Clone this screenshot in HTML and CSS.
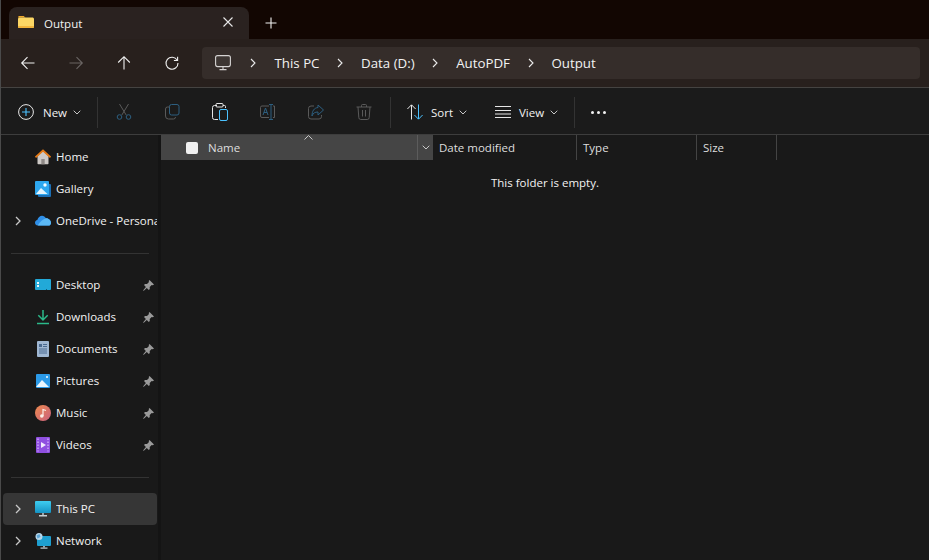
FILE: index.html
```html
<!DOCTYPE html>
<html lang="en">
<head>
    <meta charset="UTF-8">
    <meta name="viewport" content="width=device-width, initial-scale=1.0">
    <title>Output - File Explorer</title>
    <link rel="stylesheet" href="styles.css">
</head>
<body>
    <div class="titlebar">
        <div class="tab">
            <svg class="tab-icon" width="16" height="16" viewBox="0 0 16 16"><path d="M0 3.500C0 2.700.6 2 1.400 2h3.800c.4 0 .7.1 1 .4L7.600 3.600H0z" fill="#f2a92c"/><path d="M0 5c0-.9.7-1.600 1.600-1.600h12.800c.9 0 1.600.7 1.600 1.600v7.400c0 .9-.7 1.600-1.600 1.600H1.600C.7 14 0 13.300 0 12.400z" fill="#fcd765"/><path d="M0 12h16v.4c0 .9-.7 1.600-1.600 1.600H1.600C.7 14 0 13.300 0 12.400z" fill="#f2b53c"/></svg>
            <span class="tab-title">Output</span>
            <svg class="tab-close" width="10" height="10" viewBox="0 0 10 10"><path d="M.5.500l9 9M9.500.500l-9 9" stroke="#e8e8e8" stroke-width="1.100" fill="none"/></svg>
        </div>
        <svg class="tab-new" width="12" height="12" viewBox="0 0 12 12"><path d="M6 .5v11M.5 6h11" stroke="#f2f2f2" stroke-width="1.100" fill="none"/></svg>
    </div>

    <div class="navbar">
        <div class="nav-btn"><svg width="16" height="16" viewBox="0 0 16 16"><path d="M14.500 8H2M7.500 2.200 1.700 8l5.800 5.800" stroke="#f0f0f0" stroke-width="1.100" fill="none"/></svg></div>
        <div class="nav-btn"><svg width="16" height="16" viewBox="0 0 16 16"><path d="M1.500 8H14M8.500 2.200 14.300 8l-5.800 5.800" stroke="#6a6563" stroke-width="1.100" fill="none"/></svg></div>
        <div class="nav-btn"><svg width="16" height="16" viewBox="0 0 16 16"><path d="M8 14.500V2M2.200 7.500 8 1.700l5.800 5.800" stroke="#f0f0f0" stroke-width="1.100" fill="none"/></svg></div>
        <div class="nav-btn"><svg width="16" height="16" viewBox="0 0 16 16"><path d="M13.200 5.200A6 6 0 1 0 14 8" stroke="#f0f0f0" stroke-width="1.100" fill="none"/><path d="M13.600 1.800v3.700H9.900" stroke="#f0f0f0" stroke-width="1.100" fill="none"/></svg></div>
        <div class="address">
            <svg class="pc-icon" width="16" height="16" viewBox="0 0 16 16"><rect x=".6" y=".6" width="14.800" height="11" rx="2" stroke="#d5d3d2" stroke-width="1.100" fill="#3d3633"/><path d="M8 11.600v3M4.500 14.600h7" stroke="#d5d3d2" stroke-width="1.100" fill="none"/></svg>
            <svg class="crumb-sep" width="6" height="10" viewBox="0 0 6 10"><path d="M1 1l4 4-4 4" stroke="#ebebeb" stroke-width="1.100" fill="none"/></svg>
            <span class="crumb">This PC</span>
            <svg class="crumb-sep" width="6" height="10" viewBox="0 0 6 10"><path d="M1 1l4 4-4 4" stroke="#ebebeb" stroke-width="1.100" fill="none"/></svg>
            <span class="crumb">Data (D:)</span>
            <svg class="crumb-sep" width="6" height="10" viewBox="0 0 6 10"><path d="M1 1l4 4-4 4" stroke="#ebebeb" stroke-width="1.100" fill="none"/></svg>
            <span class="crumb">AutoPDF</span>
            <svg class="crumb-sep" width="6" height="10" viewBox="0 0 6 10"><path d="M1 1l4 4-4 4" stroke="#ebebeb" stroke-width="1.100" fill="none"/></svg>
            <span class="crumb">Output</span>
        </div>
    </div>

    <div class="toolbar">
        <div class="tool tool-new">
            <svg width="16" height="16" viewBox="0 0 16 16"><circle cx="8" cy="8" r="7.400" stroke="#e8e8e8" stroke-width="1" fill="none"/><path d="M8 4v8M4 8h8" stroke="#4cc2ff" stroke-width="1.100" fill="none"/></svg>
            <span class="tool-label">New</span>
            <svg class="caret" width="8" height="5" viewBox="0 0 8 5"><path d="M.7.700 4 4l3.300-3.300" stroke="#c8c8c8" fill="none"/></svg>
        </div>
        <div class="tool-sep"></div>
        <div class="tool-icon tool-first"><svg width="16" height="16" viewBox="0 0 16 16"><path d="M3.500 0l6.700 11M12.500 0 5.800 11" stroke="#5a5a5a" fill="none"/><circle cx="3.500" cy="13" r="2.300" stroke="#2d5f80" fill="none"/><circle cx="12.500" cy="13" r="2.300" stroke="#2d5f80" fill="none"/></svg></div>
        <div class="tool-icon"><svg width="16" height="16" viewBox="0 0 16 16"><rect x="5.500" y=".5" width="9.500" height="10.500" rx="2" stroke="#2d5f80" fill="none"/><path d="M5.500 3H3.500a2 2 0 0 0-2 2v7a3 3 0 0 0 3 3h5a2 2 0 0 0 2-2" stroke="#5a5a5a" fill="none"/></svg></div>
        <div class="tool-icon"><svg width="16" height="18" viewBox="0 0 16 18"><path d="M5 2.500H2.500a2 2 0 0 0-2 2v10a2 2 0 0 0 2 2H6M11 2.500h1.500a1 1 0 0 1 1 1V5" stroke="#e6e6e6" fill="none"/><rect x="4" y=".5" width="7" height="3.500" rx="1" stroke="#e6e6e6" fill="none"/><rect x="7.500" y="6.500" width="8" height="11" rx="1.500" stroke="#4cc2ff" fill="none"/></svg></div>
        <div class="tool-icon"><svg width="16" height="16" viewBox="0 0 16 16"><path d="M9 2H2a1.500 1.500 0 0 0-1.500 1.500v8.500A1.500 1.500 0 0 0 2 13.500h7M13 2h1.500v11.500H13" stroke="#5a5a5a" fill="none"/><path d="M9 .5h4M9 15.500h4M11 .5v15" stroke="#2d5f80" fill="none"/><path d="M3 11l2.500-7L8 11M4 8.500h3" stroke="#2d5f80" fill="none"/></svg></div>
        <div class="tool-icon"><svg width="16" height="16" viewBox="0 0 16 16"><path d="M6 2H3a2.500 2.500 0 0 0-2.500 2.500v8A2.500 2.500 0 0 0 3 15h8a2.500 2.500 0 0 0 2.500-2.500V11" stroke="#5a5a5a" fill="none"/><path d="M10 1l5.500 5-5.500 5V8C7 8 5 9 4 12c0-5 2-8 6-8.500z" stroke="#2d5f80" fill="none"/></svg></div>
        <div class="tool-icon tool-last"><svg width="16" height="16" viewBox="0 0 16 16"><path d="M.5 3h15M5.500 3V1.500a1 1 0 0 1 1-1h3a1 1 0 0 1 1 1V3M2 3l.8 10.500a2 2 0 0 0 2 2h6.400a2 2 0 0 0 2-2L14 3M6.500 6v6.500M9.500 6v6.500" stroke="#5a5a5a" fill="none"/></svg></div>
        <div class="tool-sep"></div>
        <div class="tool tool-sort">
            <svg width="16" height="16" viewBox="0 0 16 16"><path d="M4.500 15.500V1M.4 5 4.500.8 8.600 5" stroke="#e6e6e6" fill="none"/><path d="M11.500.500V15M7.400 11l4.100 4.200 4.100-4.200" stroke="#4cc2ff" fill="none"/></svg>
            <span class="tool-label">Sort</span>
            <svg class="caret" width="8" height="5" viewBox="0 0 8 5"><path d="M.7.700 4 4l3.300-3.300" stroke="#c8c8c8" fill="none"/></svg>
        </div>
        <div class="tool tool-view">
            <svg width="16" height="12" viewBox="0 0 16 12"><path d="M0 .5h16M0 4.500h16M0 8h16M0 11.500h16" stroke="#e6e6e6" fill="none"/></svg>
            <span class="tool-label">View</span>
            <svg class="caret" width="8" height="5" viewBox="0 0 8 5"><path d="M.7.700 4 4l3.300-3.300" stroke="#c8c8c8" fill="none"/></svg>
        </div>
        <div class="tool-sep"></div>
        <div class="tool-more"><i></i><i></i><i></i></div>
    </div>

    <div class="main">
        <div class="sidebar">
            <div class="side-row">
                <span class="twist"></span>
                <svg class="side-icon" width="16" height="16" viewBox="0 0 16 16"><path d="M2.500 7v7.500a.8.800 0 0 0 .8.800h9.400a.8.800 0 0 0 .8-.8V7L8 2z" fill="#cdc9c6"/><rect x="6.300" y="10" width="3.400" height="5.300" fill="#8e8986"/><path d="M.5 8.300 8 1.500l7.500 6.800" stroke="#e57a16" stroke-width="1.700" fill="none"/></svg>
                <span class="side-label">Home</span>
            </div>
            <div class="side-row">
                <span class="twist"></span>
                <svg class="side-icon" width="16" height="16" viewBox="0 0 16 16"><rect x="3" y="3" width="13" height="13" rx="1" fill="#1c6fb5"/><rect y="0" width="14" height="14" rx="1" fill="#2ea7ef"/><path d="M1 13l5-6 6.500 6z" fill="#e6f5fd"/><circle cx="10" cy="4" r="1.700" fill="#f4fbff"/></svg>
                <span class="side-label">Gallery</span>
            </div>
            <div class="side-row">
                <svg class="twist-icon" width="6" height="10" viewBox="0 0 6 10"><path d="M1 1l4 4-4 4" stroke="#c8c8c8" stroke-width="1.300" fill="none"/></svg>
                <svg class="side-icon" width="16" height="16" viewBox="0 0 16 16"><path d="M2.800 12.500C1.200 12.500 0 11.300 0 9.800c0-1.400 1-2.500 2.300-2.700C3 4.400 5 2.800 7 2.800c1.700 0 3.100.9 3.900 2.400C13.800 5 16 7.500 16 9.900c0 1.500-1 2.600-2.600 2.600z" fill="#2f8fe8"/><path d="M2.800 12.500C5 8.500 8 6 10.900 5.200 13.800 5 16 7.500 16 9.900c0 1.500-1 2.600-2.600 2.600z" fill="#5bb8f5"/></svg>
                <span class="side-label">OneDrive - Personal</span>
            </div>
            <div class="side-sep"></div>
            <div class="side-row">
                <span class="twist"></span>
                <svg class="side-icon" width="16" height="16" viewBox="0 0 16 16"><rect y="2" width="16" height="11" rx="1" fill="#22a9d8"/><rect x="2" y="5" width="2" height="2" fill="#e8f7fc"/><rect x="2" y="8" width="2" height="2" fill="#e8f7fc"/><rect x="11" y="12" width="1" height="1" fill="#0e5f7e"/></svg>
                <span class="side-label">Desktop</span>
                <svg class="pin" width="11" height="11" viewBox="0 0 11 11"><path d="M6.500 0 11 4.500 9.800 5.300 8.700 5l-2 2 .1 2-1 1-2-2L.8 10.800 0 10.500 2.900 7 1 5l1-1 2 .1 2-2-.3-1.100z" fill="#9a9a9a"/></svg>
            </div>
            <div class="side-row">
                <span class="twist"></span>
                <svg class="side-icon" width="16" height="16" viewBox="0 0 16 16"><path d="M8 1v9.500M3.300 6.300 8 11l4.700-4.700" stroke="#2bb98a" stroke-width="1.500" fill="none"/><path d="M2 14.500h12" stroke="#2bb98a" stroke-width="1.500"/></svg>
                <span class="side-label">Downloads</span>
                <svg class="pin" width="11" height="11" viewBox="0 0 11 11"><path d="M6.500 0 11 4.500 9.800 5.300 8.700 5l-2 2 .1 2-1 1-2-2L.8 10.800 0 10.500 2.900 7 1 5l1-1 2 .1 2-2-.3-1.100z" fill="#9a9a9a"/></svg>
            </div>
            <div class="side-row">
                <span class="twist"></span>
                <svg class="side-icon" width="16" height="16" viewBox="0 0 16 16"><rect x="2" y="0" width="12" height="16" rx="1" fill="#9fb7d2"/><path d="M4 3h3v3H4z" fill="#4a6a90"/><path d="M8 3.500h4M8 5.500h4M4 8h8M4 10h8M4 12h8" stroke="#4a6a90"/></svg>
                <span class="side-label">Documents</span>
                <svg class="pin" width="11" height="11" viewBox="0 0 11 11"><path d="M6.500 0 11 4.500 9.800 5.300 8.700 5l-2 2 .1 2-1 1-2-2L.8 10.800 0 10.500 2.900 7 1 5l1-1 2 .1 2-2-.3-1.100z" fill="#9a9a9a"/></svg>
            </div>
            <div class="side-row">
                <span class="twist"></span>
                <svg class="side-icon" width="16" height="16" viewBox="0 0 16 16"><rect x="1" y="1" width="14" height="14" rx="1" fill="#2b9ae8"/><path d="M1 14l6-7 7 7z" fill="#e9f6fe"/><circle cx="12" cy="4" r="1" fill="#f4fbff"/></svg>
                <span class="side-label">Pictures</span>
                <svg class="pin" width="11" height="11" viewBox="0 0 11 11"><path d="M6.500 0 11 4.500 9.800 5.300 8.700 5l-2 2 .1 2-1 1-2-2L.8 10.800 0 10.500 2.900 7 1 5l1-1 2 .1 2-2-.3-1.100z" fill="#9a9a9a"/></svg>
            </div>
            <div class="side-row">
                <span class="twist"></span>
                <svg class="side-icon" width="16" height="16" viewBox="0 0 16 16"><defs><linearGradient id="musicFill" x1="0" y1="0" x2="1" y2="1"><stop offset="0" stop-color="#ee8a4e"/><stop offset="1" stop-color="#c9607f"/></linearGradient></defs><circle cx="8" cy="8" r="8" fill="url(#musicFill)"/><circle cx="6.800" cy="11" r="1.800" fill="#fbeee8"/><path d="M8 11V4.500l3 1" stroke="#fbeee8" stroke-width="1.200" fill="none"/></svg>
                <span class="side-label">Music</span>
                <svg class="pin" width="11" height="11" viewBox="0 0 11 11"><path d="M6.500 0 11 4.500 9.800 5.300 8.700 5l-2 2 .1 2-1 1-2-2L.8 10.800 0 10.500 2.900 7 1 5l1-1 2 .1 2-2-.3-1.100z" fill="#9a9a9a"/></svg>
            </div>
            <div class="side-row">
                <span class="twist"></span>
                <svg class="side-icon" width="16" height="16" viewBox="0 0 16 16"><rect x="1" y="0" width="14" height="16" rx="1" fill="#8f4fe0"/><path d="M3 1.500v13M13 1.500v13" stroke="#c9a6f5" stroke-width="1.500" stroke-dasharray="1.500 1.500"/><path d="M6 5l5 3-5 3z" fill="#f2eafd"/></svg>
                <span class="side-label">Videos</span>
                <svg class="pin" width="11" height="11" viewBox="0 0 11 11"><path d="M6.500 0 11 4.500 9.800 5.300 8.700 5l-2 2 .1 2-1 1-2-2L.8 10.800 0 10.500 2.900 7 1 5l1-1 2 .1 2-2-.3-1.100z" fill="#9a9a9a"/></svg>
            </div>
            <div class="side-sep"></div>
            <div class="side-row selected">
                <svg class="twist-icon" width="6" height="10" viewBox="0 0 6 10"><path d="M1 1l4 4-4 4" stroke="#c8c8c8" stroke-width="1.300" fill="none"/></svg>
                <svg class="side-icon" width="16" height="16" viewBox="0 0 16 16"><defs><linearGradient id="screenFill" x1="0" y1="0" x2="0" y2="1"><stop offset="0" stop-color="#3fcdf0"/><stop offset="1" stop-color="#1593c4"/></linearGradient></defs><rect y="0" width="16" height="12" rx="1" fill="url(#screenFill)"/><rect x="7" y="12" width="2" height="2" fill="#9aa4aa"/><rect x="4" y="14" width="8" height="1.500" fill="#c8ced2"/></svg>
                <span class="side-label">This PC</span>
            </div>
            <div class="side-row">
                <svg class="twist-icon" width="6" height="10" viewBox="0 0 6 10"><path d="M1 1l4 4-4 4" stroke="#c8c8c8" stroke-width="1.300" fill="none"/></svg>
                <svg class="side-icon" width="16" height="16" viewBox="0 0 16 16"><rect x="2" y="3" width="14" height="10" rx="1" fill="#1e9fd0"/><rect x="8" y="13" width="2" height="1.500" fill="#9aa4aa"/><rect x="5.500" y="14.500" width="7" height="1.200" fill="#c8ced2"/><circle cx="4" cy="3.500" r="3.500" fill="#b9d7ea"/><path d="M1.500 2.500l3-1.500 1 3-3 1.500z" fill="#5ea6d6"/></svg>
                <span class="side-label">Network</span>
            </div>
        </div>
        <div class="splitter"></div>
        <div class="content">
            <div class="columns">
                <div class="col col-name">
                    <span class="name-check"></span>
                    <span class="col-title">Name</span>
                    <svg class="sort-mark" width="9" height="5" viewBox="0 0 9 5"><path d="M.5 4.500l4-4 4 4" stroke="#c8c8c8" fill="none"/></svg>
                    <span class="name-drop"><svg width="8" height="5" viewBox="0 0 8 5"><path d="M.7.700 4 4l3.300-3.300" stroke="#c8c8c8" fill="none"/></svg></span>
                </div>
                <div class="col col-date"><span class="col-title">Date modified</span></div>
                <div class="col col-type"><span class="col-title">Type</span></div>
                <div class="col col-size"><span class="col-title">Size</span></div>
            </div>
            <p class="empty-note">This folder is empty.</p>
        </div>
    </div>
</body>
</html>
```

FILE: styles.css
```css
:root {
    --title-bg: #120602;
    --tab-bg: #2a2220;
    --nav-bg: #28201d;
    --address-bg: #352d2a;
    --pane-bg: #191919;
    --toolbar-bg: #1b1b1b;
    --line: #3d3d3d;
    --text: #f2f2f2;
}

* {
    box-sizing: border-box;
}

html, body {
    height: 100%;
}

body {
    margin: 0;
    width: 929px;
    height: 560px;
    overflow: hidden;
    display: flex;
    flex-direction: column;
    background-color: var(--pane-bg);
    border-left: 1px solid #4a4a4a;
    color: var(--text);
    font-family: "Open Sans", "Noto Sans", sans-serif;
    font-size: 12px;
}

.titlebar {
    height: 39px;
    flex: none;
    display: flex;
    align-items: flex-end;
    padding-left: 8px;
    background-color: var(--title-bg);
}

.tab {
    width: 240px;
    height: 32px;
    display: flex;
    align-items: center;
    padding: 0 16px 0 9px;
    background-color: var(--tab-bg);
    border-radius: 8px 8px 0 0;
}

.tab-icon {
    margin-right: 10px;
    margin-top: -2px;
}

.tab-title {
    flex: 1;
    font-size: 11.5px;
    font-weight: 500;
}

.tab-close {
    margin-top: -2px;
}

.tab-new {
    margin: 0 0 10px 16px;
}

.navbar {
    height: 49px;
    flex: none;
    display: flex;
    align-items: center;
    padding-left: 3px;
    background-color: var(--nav-bg);
    border-bottom: 1px solid #454341;
}

.nav-btn {
    width: 48px;
    height: 32px;
    display: flex;
    align-items: center;
    justify-content: center;
}

.address {
    width: 718px;
    height: 32px;
    margin-left: 6px;
    display: flex;
    align-items: center;
    padding-left: 13px;
    background-color: var(--address-bg);
    border-radius: 4px;
}

.crumb-sep {
    margin: 0 17.75px;
    flex: none;
}

.pc-icon {
    margin-right: 1.25px;
}

.pc-icon + .crumb-sep {
    margin-right: 18.5px;
}

.crumb {
    font-size: 13.3px;
    white-space: nowrap;
}

.toolbar {
    height: 47px;
    flex: none;
    display: flex;
    align-items: center;
    padding-top: 2px;
    background-color: var(--toolbar-bg);
    border-bottom: 1px solid var(--line);
}

.tool {
    display: flex;
    align-items: center;
    height: 32px;
}

.tool-new {
    width: 96px;
    padding-left: 17px;
}

.tool-new .tool-label {
    margin: 0 6px 0 9px;
}

.tool-sep {
    width: 1px;
    height: 31px;
    flex: none;
    background-color: #333;
}

.tool-icon {
    width: 48px;
    height: 32px;
    display: flex;
    align-items: center;
    justify-content: center;
}

.tool-first {
    margin-left: 2px;
}

.tool-last {
    margin-right: 2px;
}

.tool-sort {
    width: 88px;
    padding-left: 16px;
}

.tool-sort .tool-label {
    margin: 0 6px 0 8px;
}

.tool-view {
    width: 95px;
    padding-left: 16px;
}

.tool-view .tool-label {
    margin: 0 6px 0 8px;
}

.tool-label {
    font-size: 11.5px;
}

.tool-more {
    display: flex;
    gap: 3px;
    margin-left: 16px;
}

.tool-more i {
    width: 3px;
    height: 3px;
    border-radius: 50%;
    background-color: #f2f2f2;
}

.main {
    flex: 1;
    display: flex;
    min-height: 0;
}

.sidebar {
    width: 157px;
    flex: none;
    padding: 6px 1px 0 2px;
    overflow: hidden;
}

.side-row {
    height: 32px;
    display: flex;
    align-items: center;
    border-radius: 4px;
    white-space: nowrap;
}

.side-row.selected {
    background-color: #363636;
}

.twist {
    width: 32px;
    flex: none;
}

.twist-icon {
    width: 6px;
    margin: 0 14px 0 12px;
    flex: none;
}

.side-icon {
    flex: none;
    margin-right: 5px;
}

.side-label {
    flex: 1;
    overflow: hidden;
    font-size: 11.5px;
    margin-top: -1px;
}

.pin {
    margin-right: 3px;
    flex: none;
}

.side-sep {
    height: 32px;
    display: flex;
    align-items: center;
    padding: 0 8px;
}

.side-sep::before {
    content: "";
    flex: 1;
    height: 1px;
    background-color: #333;
}

.splitter {
    width: 3px;
    flex: none;
    background-color: #141414;
}

.content {
    flex: 1;
    min-width: 0;
}

.columns {
    height: 25px;
    display: flex;
}

.col {
    display: flex;
    align-items: center;
    padding-left: 6px;
    border-right: 1px solid #444;
    color: #dedede;
}

.col-title {
    font-size: 11.5px;
}

.col-name {
    position: relative;
    width: 272px;
    padding-left: 25px;
    background-color: #454545;
    border-right: none;
}

.name-check {
    width: 12px;
    height: 12px;
    margin-right: 10px;
    background-color: #f0f0f0;
    border-radius: 2px;
}

.name-drop {
    width: 16px;
    height: 25px;
    margin-left: auto;
    display: flex;
    align-items: center;
    justify-content: center;
    border-left: 1px solid #5c5c5c;
}

.sort-mark {
    position: absolute;
    left: 143px;
    top: 0;
}

.col-date {
    width: 144px;
}

.col-type {
    width: 120px;
}

.col-size {
    width: 80px;
}

.empty-note {
    margin: 15px 0 0;
    width: 768px;
    text-align: center;
    font-size: 11.5px;
}
```
